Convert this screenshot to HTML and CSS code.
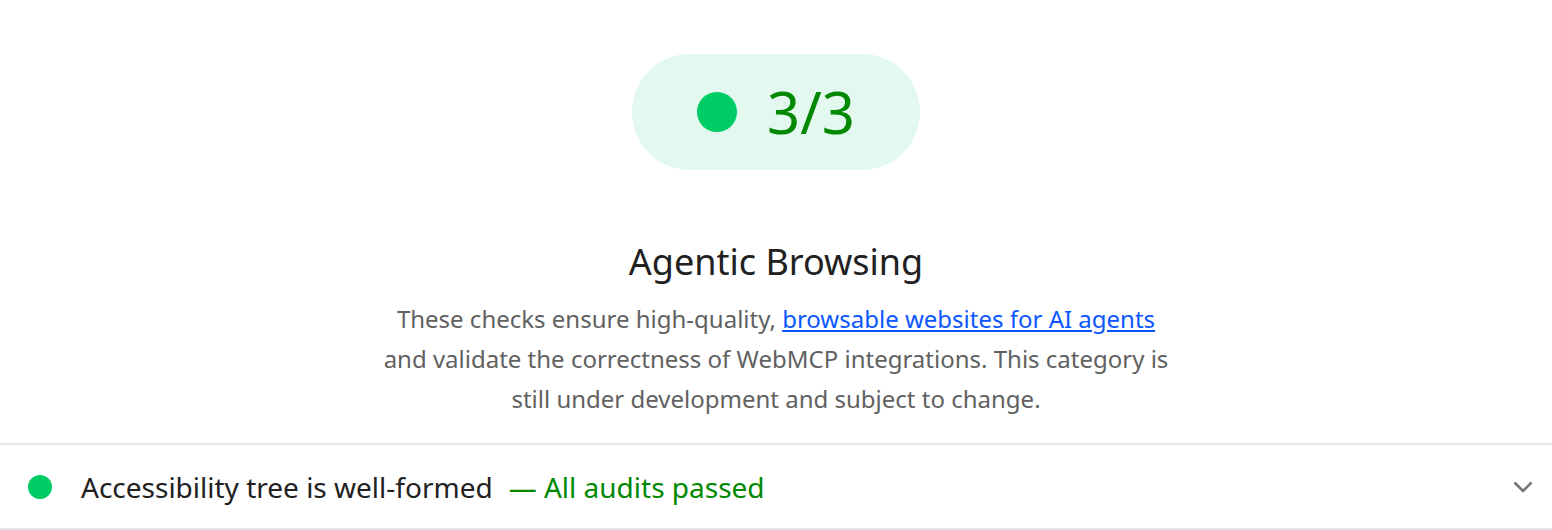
FILE: index.html
```html
<!DOCTYPE html>
<html lang="en">
<head>
    <meta charset="UTF-8">
    <title>Agentic Browsing</title>
    <link rel="stylesheet" href="styles.css">
</head>
<body>
    <div class="category">
        <div class="score-pill">
            <span class="score-dot"></span>
            <span class="score-value">3/3</span>
        </div>

        <h2 class="category-title">Agentic Browsing</h2>
        <p class="category-desc">
            These checks ensure high-quality, <a href="#">browsable websites for AI agents</a>
            and validate the correctness of WebMCP integrations. This category is
            still under development and subject to change.
        </p>

        <!-- Grupo de auditorías -->
        <div class="audit-group">
            <span class="audit-dot"></span>
            <span class="audit-title">Accessibility tree is well-formed</span>
            <span class="audit-summary">— All audits passed</span>
            <svg class="chevron" width="24" height="24" viewBox="0 0 24 24">
                <path d="M3.5 7.5l8.5 8.5 8.5-8.5" fill="none" stroke="#757575" stroke-width="2.5"/>
            </svg>
        </div>
    </div>
</body>
</html>
```

FILE: styles.css
```css
* {
    margin: 0;
    padding: 0;
    box-sizing: border-box;
}

body {
    background: #fff;
    font-family: 'Noto Sans', sans-serif;
    color: #212121;
}

.category {
    display: flex;
    flex-direction: column;
    align-items: center;
    padding-top: 54px;
}

.score-pill {
    display: flex;
    align-items: center;
    gap: 30px;
    width: 288px;
    height: 116px;
    justify-content: center;
    background: #e3f8ee;
    border-radius: 58px;
}

.score-dot {
    width: 40px;
    height: 40px;
    border-radius: 50%;
    background: #00cc66;
}

.score-value {
    color: #008800;
    font-size: 58px;
    line-height: 1;
}

.category-title {
    margin-top: 68px;
    font-size: 36px;
    font-weight: 400;
    line-height: 48px;
}

.category-desc {
    margin-top: 13px;
    max-width: 792px;
    text-align: center;
    font-size: 24px;
    line-height: 40px;
    color: #616161;
}

.category-desc a {
    color: #0b57ff;
}

.audit-group {
    display: flex;
    align-items: center;
    width: 100%;
    margin-top: 24px;
    height: 87px;
    border-top: 2px solid #e6e6e6;
    border-bottom: 2px solid #e6e6e6;
    padding: 0 17px 0 28px;
}

.audit-dot {
    width: 24px;
    height: 24px;
    border-radius: 50%;
    background: #00cc66;
    margin-right: 29px;
}

.audit-title {
    font-size: 28px;
    color: #212121;
}

.audit-summary {
    font-size: 28px;
    color: #008800;
    margin-left: 16px;
}

.chevron {
    margin-left: auto;
}
```
